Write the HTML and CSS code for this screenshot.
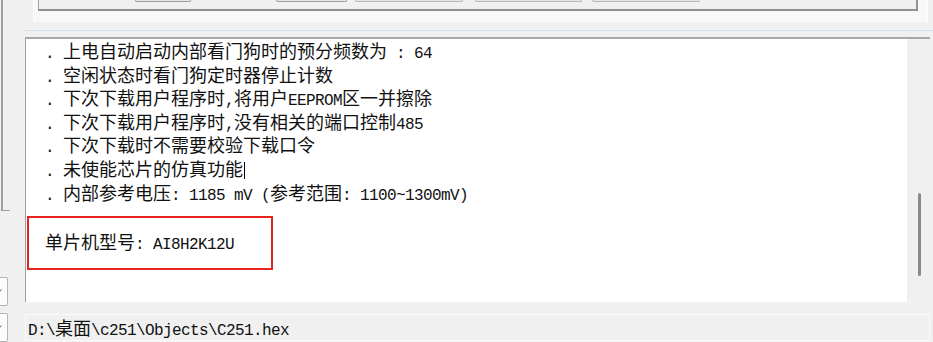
FILE: index.html
```html
<!DOCTYPE html>
<html lang="zh-CN">
<head>
<meta charset="utf-8">
<title>ISP 输出</title>
<link rel="stylesheet" href="styles.css">
</head>
<body>
<div class="app">
  <div class="side">
    <div class="sidebox"></div>
    <div class="combo combo-1"><svg class="chev" width="6" height="4" viewBox="0 0 6 4"><polyline points="0.5,0.5 3,3.3 5.5,0.5" fill="none" stroke="#606060" stroke-width="1"/></svg></div>
    <div class="combo combo-2"><svg class="chev" width="6" height="4" viewBox="0 0 6 4"><polyline points="0.5,0.5 3,3.3 5.5,0.5" fill="none" stroke="#606060" stroke-width="1"/></svg></div>
  </div>
  <div class="main">
    <div class="toparea">
      <div class="toppanel">
        <div class="btnbox">
          <div class="btn btn-1"></div>
          <div class="btn btn-2"></div>
          <div class="btn btn-3"></div>
          <div class="btn btn-4"></div>
          <div class="btn btn-5"></div>
        </div>
      </div>
    </div>
    <div class="sep"></div>
    <div class="output">
      <div class="text">
        <div class="line"><span class="a">  . </span>上电自动启动内部看门狗时的预分频数为<span class="a"> : 64</span></div>
        <div class="line"><span class="a">  . </span>空闲状态时看门狗定时器停止计数</div>
        <div class="line"><span class="a">  . </span>下次下载用户程序时<span class="a">,</span>将用户<span class="a">EEPROM</span>区一并擦除</div>
        <div class="line"><span class="a">  . </span>下次下载用户程序时<span class="a">,</span>没有相关的端口控制<span class="a">485</span></div>
        <div class="line"><span class="a">  . </span>下次下载时不需要校验下载口令</div>
        <div class="line"><span class="a">  . </span>未使能芯片的仿真功能<span class="caret"></span></div>
        <div class="line"><span class="a">  . </span>内部参考电压<span class="a">: 1185 mV (</span>参考范围<span class="a">: 1100~1300mV)</span></div>
        <div class="mark"><div class="line">单片机型号<span class="a">: AI8H2K12U</span></div></div>
      </div>
      <div class="scrollbar"><div class="thumb"></div></div>
    </div>
    <div class="status"><span class="a">D:\</span>桌面<span class="a">\c251\Objects\C251.hex</span></div>
  </div>
</div>
</body>
</html>
```

FILE: styles.css
```css
html, body {
  margin: 0;
  padding: 0;
  background: #f0f0f0;
}
body {
  width: 933px;
  height: 342px;
  overflow: hidden;
  font-family: "Noto Sans CJK SC", "Liberation Sans", sans-serif;
  font-size: 18px;
  color: #111;
}
.app {
  display: flex;
  height: 342px;
}
.side {
  width: 25px;
  flex: none;
  display: flex;
  flex-direction: column;
  overflow: hidden;
}
.sidebox {
  margin-left: 1px;
  width: 9px;
  height: 217px;
  box-sizing: border-box;
  border-left: 2px solid #a0a0a0;
  border-bottom: 1px solid #a0a0a0;
}
.combo {
  margin-left: -20px;
  width: 28px;
  box-sizing: border-box;
  border: 1px solid #b4b4b4;
  border-radius: 2px;
  background: #fcfcfc;
  display: flex;
  align-items: center;
  justify-content: flex-end;
  padding-right: 5px;
}
.combo-1 {
  margin-top: 66px;
  height: 30px;
}
.combo-2 {
  margin-top: 7px;
  height: 30px;
}
.chev {
  display: block;
}
.main {
  width: 908px;
  flex: none;
  display: flex;
  flex-direction: column;
}
.toparea {
  height: 30px;
}
.toppanel {
  margin-left: 8px;
  width: 895px;
  height: 22px;
  box-sizing: border-box;
  background: #f8f8f8;
  border-left: 1px solid #fdfdfd;
  border-right: 1px solid #fdfdfd;
}
.btnbox {
  margin-left: 4px;
  width: 880px;
  height: 11px;
  box-sizing: border-box;
  background: #f0f0f0;
  border-left: 1px solid #a0a0a0;
  border-right: 2px solid #909090;
  border-bottom: 2px solid #909090;
  display: flex;
  align-items: flex-start;
}
.btn {
  height: 2px;
  box-sizing: border-box;
  background: #e6e6e6;
  border: 1px solid #b8b8b8;
  border-top: none;
  border-radius: 0 0 3px 3px;
}
.btn-1 { margin-left: 96px; width: 56px; border-color: #9c9c9c; }
.btn-2 { margin-left: 85px; width: 71px; border-color: #a0a0a0; }
.btn-3 { margin-left: 8px; width: 108px; }
.btn-4 { margin-left: 12px; width: 107px; }
.btn-5 { margin-left: 10px; width: 108px; }
.sep {
  height: 1px;
  background: #c8e0f0;
}
.output {
  margin-top: 6px;
  width: 905px;
  height: 265px;
  box-sizing: border-box;
  border-top: 2px solid #a8a8a8;
  border-left: 1px solid #a0a0a0;
  display: flex;
  background: #fff;
}
.text {
  flex: 1;
  padding-left: 1px;
}
.line {
  height: 23.6px;
  line-height: 23.6px;
  white-space: pre;
}
.a {
  font-family: "Liberation Mono", "DejaVu Sans Mono", monospace;
  font-size: 16px;
  letter-spacing: -0.6px;
  line-height: 16px;
}
.caret {
  display: inline-block;
  width: 1px;
  height: 17px;
  background: #000;
  vertical-align: -3px;
  margin-left: 1px;
}
.mark {
  margin-top: 11.8px;
  width: 246px;
  height: 54px;
  box-sizing: border-box;
  border: 2px solid #e52420;
  padding-left: 16px;
  padding-top: 12px;
}
.scrollbar {
  width: 23px;
  flex: none;
  background: #f0f0f0;
}
.thumb {
  margin-top: 154px;
  margin-left: 11px;
  width: 3px;
  height: 83px;
  border-radius: 2px;
  background: #8a8a8a;
}
.status {
  margin-top: 12px;
  width: 905px;
  height: 27px;
  box-sizing: border-box;
  border: 1px solid #fbfbfb;
  background: #f0f0f0;
  padding-left: 2px;
  line-height: 25px;
  white-space: pre;
}
```
